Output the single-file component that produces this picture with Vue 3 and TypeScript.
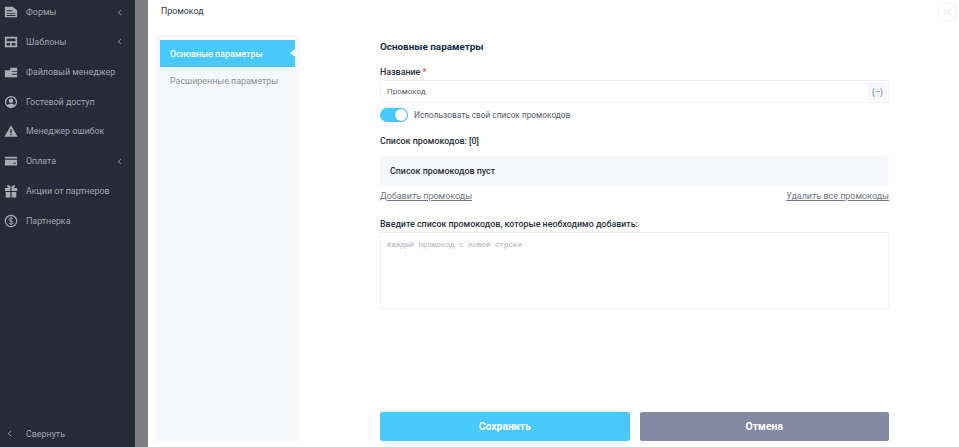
<script setup lang="ts">
interface MenuItem { label: string; icon: string; arrow?: boolean }
const items: MenuItem[] = [
  { label: 'Формы', icon: 'forms', arrow: true },
  { label: 'Шаблоны', icon: 'templates', arrow: true },
  { label: 'Файловый менеджер', icon: 'files' },
  { label: 'Гостевой доступ', icon: 'guest' },
  { label: 'Менеджер ошибок', icon: 'errors' },
  { label: 'Оплата', icon: 'pay', arrow: true },
  { label: 'Акции от партнеров', icon: 'gift' },
  { label: 'Партнерка', icon: 'dollar' },
]
</script>

<template>
  <div class="page">
    <aside class="sidebar">
      <nav class="menu">
        <a v-for="item in items" :key="item.label" class="menu-item">
          <svg class="menu-icon" viewBox="0 0 16 16" fill="#a9acb3">
            <template v-if="item.icon === 'forms'">
              <path d="M1 2h9l5 4v8H1z" />
              <path d="M3 6h7v1H3zM3 9h10v1H3zM3 11.500h10v1H3z" fill="#262b38" />
            </template>
            <template v-else-if="item.icon === 'templates'">
              <path fill-rule="evenodd" d="M1 2h14v12H1zM3 4v3h10V4zM3 9v3h4V9zM9 9v3h4V9z" />
            </template>
            <template v-else-if="item.icon === 'files'">
              <path d="M1 6h6V3h8v11H1z" />
              <path d="M9 7h6v1H9zM9 10h6v1H9z" fill="#262b38" />
            </template>
            <template v-else-if="item.icon === 'guest'">
              <path fill-rule="evenodd" d="M8 1a7 7 0 1 0 0 14A7 7 0 0 0 8 1zm0 1.500a5.500 5.500 0 0 1 4.300 8.900C11.200 10.400 9.700 10 8 10s-3.200.4-4.300 1.400A5.500 5.500 0 0 1 8 2.500z" />
              <circle cx="8" cy="6.500" r="2.600" />
            </template>
            <template v-else-if="item.icon === 'errors'">
              <path d="M8 1.500 15.500 14.500H.5z" />
              <path d="M7.200 6h1.600v4.500H7.200zM7.200 11.300h1.600v1.500H7.200z" fill="#262b38" />
            </template>
            <template v-else-if="item.icon === 'pay'">
              <path d="M1 3h14v2H1zM1 6.500h14V13H1z" />
              <path d="M10.500 10h3v1h-3z" fill="#262b38" />
            </template>
            <template v-else-if="item.icon === 'gift'">
              <path d="M1 4.500h6.300V8H1zM8.700 4.500H15V8H8.700zM2 9h5.300v6.500H2zM8.700 9H14v6.500H8.700z" />
              <path d="M8 4.500C6 .5 3.500.5 3.500 2.500S6 4.500 8 4.500zm0 0C10 .5 12.500.5 12.500 2.500S10 4.500 8 4.500z" />
            </template>
            <template v-else>
              <circle cx="8" cy="8" r="6.500" fill="none" stroke="#a9acb3" stroke-width="1.300" />
              <path d="M10.300 5.800C10 4.800 9 4.400 8 4.400c-1.300 0-2.300.7-2.300 1.800C5.700 8.700 10.400 7.300 10.400 9.800c0 1.100-1.100 1.800-2.400 1.800-1.100 0-2.100-.5-2.400-1.500M8 3.200v9.600" fill="none" stroke="#a9acb3" stroke-width="1.100" />
            </template>
          </svg>
          <span class="menu-label">{{ item.label }}</span>
          <svg v-if="item.arrow" class="chevron" viewBox="0 0 6 8"><path d="M5 .8 1.500 4 5 7.200" /></svg>
        </a>
      </nav>
      <a class="collapse">
        <svg class="chevron collapse-chevron" viewBox="0 0 6 8"><path d="M5 .8 1.500 4 5 7.200" /></svg>
        <span class="menu-label">Свернуть</span>
      </a>
    </aside>
    <div class="backdrop"></div>
    <main class="panel">
      <header class="panel-header">
        <span class="panel-title">Промокод</span>
        <button class="close" aria-label="Закрыть">
          <svg viewBox="0 0 10 10"><path d="M1.500 1.500l7 7M8.500 1.500l-7 7" /></svg>
        </button>
      </header>
      <div class="panel-body">
        <div class="tabs">
          <div class="tab active">Основные параметры</div>
          <div class="tab">Расширенные параметры</div>
        </div>
        <section class="form">
          <div class="fields">
            <h2 class="form-title">Основные параметры</h2>
            <label class="label name-label">Название <em>*</em></label>
            <div class="input">
              <span>Промокод</span>
              <span class="vars">{–}</span>
            </div>
            <div class="toggle-row">
              <span class="toggle"><span class="knob"></span></span>
              <span class="toggle-text">Использовать свой список промокодов</span>
            </div>
            <div class="label list-label">Список промокодов: [0]</div>
            <div class="empty">Список промокодов пуст</div>
            <div class="links">
              <a>Добавить промокоды</a>
              <a>Удалить все промокоды</a>
            </div>
            <label class="label area-label">Введите список промокодов, которые необходимо добавить:</label>
            <div class="area">Каждый промокод с новой строки</div>
          </div>
          <div class="actions">
            <button class="btn save">Сохранить</button>
            <button class="btn cancel">Отмена</button>
          </div>
        </section>
      </div>
    </main>
  </div>
</template>

<style>
html, body { margin: 0; padding: 0; overflow: hidden; background: #fff; }
</style>

<style scoped>
.page {
  width: 959px;
  height: 447px;
  display: flex;
  overflow: hidden;
  font-family: Roboto, "Noto Sans", sans-serif;
  font-size: 8.9px;
}
.sidebar {
  width: 135px;
  flex: none;
  background: #262b38;
  display: flex;
  flex-direction: column;
  justify-content: space-between;
  color: #a3a6ae;
}
.menu { margin-top: -3px; display: flex; flex-direction: column; }
.menu-item {
  height: 29.86px;
  display: flex;
  align-items: center;
  padding-left: 4px;
  position: relative;
}
.menu-icon { width: 14px; height: 14px; flex: none; margin-right: 8px; }
.menu-label { font-size: 8.900px; white-space: nowrap; }
.chevron { width: 5px; height: 7px; fill: none; stroke: #a9acb3; stroke-width: 1; }
.menu-item .chevron { position: absolute; left: 117px; top: 11.500px; }
.collapse { height: 27px; display: flex; align-items: center; padding-left: 7px; }
.collapse-chevron { margin-right: 14px; }
.backdrop { width: 13px; flex: none; background: #7e7f83; }
.panel { flex: 1; background: #fff; display: flex; flex-direction: column; min-width: 0; }
.panel-header {
  height: 35px;
  flex: none;
  display: flex;
  justify-content: space-between;
  align-items: flex-start;
  padding: 5px 3px 0 13px;
  box-sizing: border-box;
}
.panel-title { font-size: 8.800px; color: #33383f; line-height: 12px; }
.close {
  width: 18px;
  height: 18px;
  padding: 3px;
  margin-top: -2px;
  background: #fff;
  border: 1px solid #f0f1f4;
  border-radius: 2px;
  box-sizing: border-box;
  display: flex;
}
.close svg { width: 10px; height: 10px; fill: none; stroke: #e3e5ea; stroke-width: 1; }
.panel-body { flex: 1; display: flex; padding: 0 70px 6px 7px; min-height: 0; }
.tabs {
  width: 145px;
  flex: none;
  background: #f5f7fb;
  padding: 5px;
  box-sizing: border-box;
}
.tab {
  height: 27px;
  display: flex;
  align-items: center;
  padding: 1px 0 0 10px;
  box-sizing: border-box;
  color: #8a8f99;
  font-size: 8.900px;
  position: relative;
}
.tab.active { background: #48c9ff; color: #fff; font-weight: 500; }
.tab.active::after {
  content: "";
  position: absolute;
  right: 0;
  top: 9px;
  border: 4.500px solid transparent;
  border-right: 5px solid #f5f7fb;
  border-left: 0;
}
.form {
  flex: 1;
  min-width: 0;
  margin-left: 80px;
  display: flex;
  flex-direction: column;
  justify-content: space-between;
}
.form-title { margin: 5px 0 0; font-size: 9.900px; line-height: 13px; font-weight: 700; color: #122b40; }
.label { font-size: 8.900px; font-weight: 500; color: #2a2f38; line-height: 12px; display: block; }
.label em { color: #ef3b3b; font-style: normal; }
.name-label { margin-top: 13px; }
.input {
  height: 23px;
  margin-top: 2px;
  box-sizing: border-box;
  border: 1px solid #f0f1f4;
  border-radius: 2px;
  display: flex;
  align-items: center;
  justify-content: space-between;
  padding: 0 1px 0 6px;
  font-size: 8px;
  color: #555a64;
}
.vars {
  width: 19px;
  height: 19px;
  background: #f5f7fb;
  border-radius: 2px;
  display: flex;
  align-items: center;
  justify-content: center;
  color: #7e8ba3;
  font-size: 8.500px;
}
.toggle-row { display: flex; align-items: center; margin-top: 3px; height: 18px; }
.toggle {
  width: 28px;
  height: 14px;
  border-radius: 7px;
  background: #48c9ff;
  position: relative;
  margin-right: 6px;
  flex: none;
}
.knob {
  position: absolute;
  right: 1px;
  top: 1px;
  width: 12px;
  height: 12px;
  border-radius: 50%;
  background: #fff;
  box-shadow: 0 0 2px rgba(0, 60, 90, .35);
}
.toggle-text { font-size: 8.300px; color: #555a64; }
.list-label { margin-top: 11px; }
.empty {
  height: 30px;
  margin-top: 9px;
  background: #f5f7fb;
  display: flex;
  align-items: center;
  padding-left: 10px;
  font-size: 8.900px;
  font-weight: 500;
  color: #2a2f38;
}
.links {
  display: flex;
  justify-content: space-between;
  margin-top: 4px;
  line-height: 13px;
  font-size: 8.950px;
  color: #6f7580;
}
.links a { text-decoration: underline; }
.area-label { margin-top: 15px; }
.area {
  height: 77px;
  margin-top: 2px;
  box-sizing: border-box;
  border: 1px solid #f0f1f4;
  padding: 7px 6px 6px;
  font-family: "Liberation Mono", monospace;
  font-size: 7.500px;
  line-height: 10px;
  color: #a9adb5;
}
.actions { display: flex; gap: 10px; }
.btn {
  flex: 1;
  height: 29px;
  border: 0;
  border-radius: 2px;
  color: #fff;
  font-family: inherit;
  font-size: 10.400px;
  font-weight: 700;
}
.save { background: #48c9ff; }
.cancel { background: #828ba3; }
</style>
